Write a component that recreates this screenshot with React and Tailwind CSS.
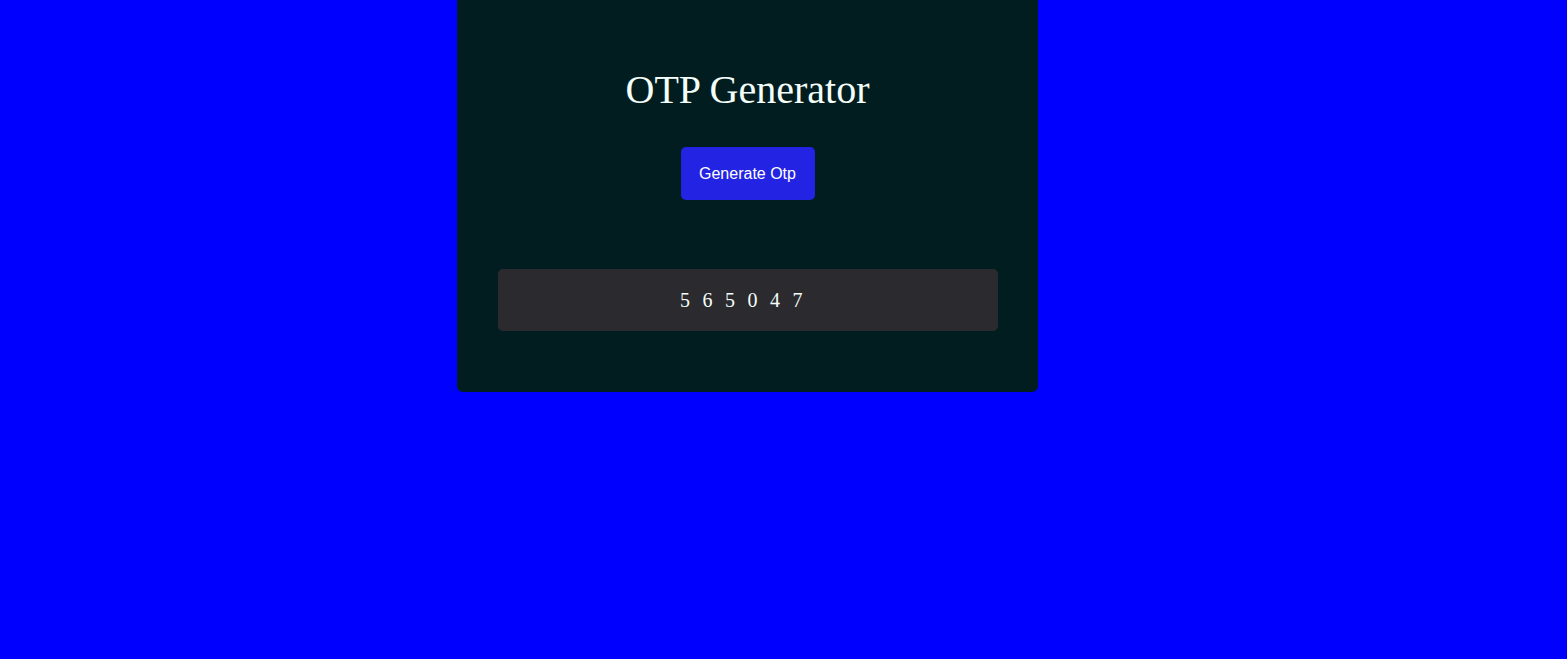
import { useState } from 'react'

const makeOtp = () =>
  Array.from({ length: 6 }, () => Math.floor(Math.random() * 10)).join('')

const App = () => {
  const [otp, setOtp] = useState('565047')

  return (
    <div className="min-h-screen w-full bg-[#0000ff]">
      <div className="ml-[457px] w-[581px] bg-[#011d20] rounded-b-md flex flex-col items-center pt-[67px] pb-[61px]">
        {/* Title */}
        <h1 className="text-[40px] leading-[46px] text-[#f5fffa] font-['Liberation_Serif',serif]">
          OTP Generator
        </h1>

        <button
          onClick={() => setOtp(makeOtp())}
          className="mt-[34px] w-[134px] h-[53px] rounded-[5px] bg-[#2323e4] text-white text-[16px] font-['Liberation_Sans',Arial,sans-serif]"
        >
          Generate Otp
        </button>

        {/* Result */}
        <div className="mt-[69px] w-[500px] h-[62px] rounded-[5px] bg-[#2b2a2f] flex items-center justify-center">
          <p className="text-[20px] leading-none tracking-[12.5px] text-[#f5fffa] font-['Liberation_Serif',serif]">
            {otp}
          </p>
        </div>
      </div>
    </div>
  )
}

export default App
